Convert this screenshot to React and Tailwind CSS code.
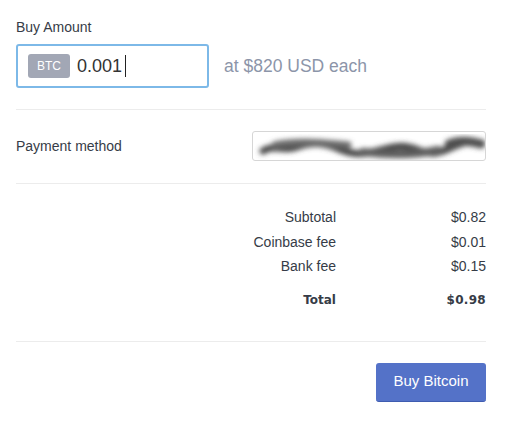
import React from 'react';

const rows = [
  ['Subtotal', '$0.82'],
  ['Coinbase fee', '$0.01'],
  ['Bank fee', '$0.15'],
];

// blurred-out card number, drawn as a smeared stroke
function BlurredMethod() {
  return (
    <div className="w-[234px] h-[30px] rounded-[3px] border border-[#d6d6d6] overflow-hidden">
      <svg width="234" height="30" viewBox="0 0 234 30">
        <defs>
          <filter id="smear" x="-10%" y="-50%" width="120%" height="200%">
            <feGaussianBlur stdDeviation="2.8" />
          </filter>
        </defs>
        <g filter="url(#smear)" fill="none" strokeLinecap="round">
          <path d="M10 19 C22 12 30 20 44 15 S70 10 86 17 S112 22 128 18 S150 12 168 19 S196 14 214 10 L228 11" stroke="#4a4a4a" strokeWidth="7" />
          <path d="M22 13 C45 8 70 11 95 13" stroke="#6a6a6a" strokeWidth="7" />
          <path d="M110 20 C135 23 160 24 185 18" stroke="#5d5d5d" strokeWidth="8" />
          <path d="M196 12 C206 8 218 9 228 12" stroke="#505050" strokeWidth="9" />
        </g>
      </svg>
    </div>
  );
}

export default function App() {
  return (
    <div
      className="w-[511px] h-[429px] bg-white pl-4 pr-[25px] pt-[18px] text-[#363c47]"
      style={{ fontFamily: '"Liberation Sans", Arial, sans-serif' }}
    >
      <div className="text-sm leading-[18px]">Buy Amount</div>

      {/* amount input */}
      <div className="mt-2 flex items-center">
        <div className="w-[193px] h-[44px] border-2 border-[#7db9e8] rounded-[3px] flex items-center pl-[10px]">
          <span className="w-[42px] h-6 rounded-[3px] bg-[#a2a7b5] text-white text-[12px] flex items-center justify-center">
            BTC
          </span>
          <span className="ml-[7px] text-[18px] text-[#333]">0.001</span>
          <span className="ml-[3px] w-px h-[22px] bg-[#222]" />
        </div>
        <span className="ml-[15px] text-[17.5px] text-[#8c95a9]">at $820 USD each</span>
      </div>

      <div className="mt-[21px] h-px bg-[#ececec]" />

      {/* payment method */}
      <div className="mt-[21px] flex items-center justify-between">
        <span className="text-sm">Payment method</span>
        <BlurredMethod />
      </div>

      <div className="mt-[22px] h-px bg-[#ececec]" />

      {/* summary */}
      <div className="mt-[21px] flex flex-col">
        {rows.map(([label, value]) => (
          <div key={label} className="flex h-[24.5px] items-center text-sm">
            <span className="flex-1 text-right">{label}</span>
            <span className="w-[150px] text-right">{value}</span>
          </div>
        ))}
        <div
          className="mt-[9px] flex h-6 items-center text-[12px] font-bold"
          style={{ fontFamily: '"DejaVu Sans", sans-serif' }}
        >
          <span className="flex-1 text-right">Total</span>
          <span className="w-[150px] text-right tracking-[0.3px]">$0.98</span>
        </div>
      </div>

      <div className="mt-[29px] h-px bg-[#ececec]" />

      <div className="mt-[21px] flex justify-end">
        <button className="w-[110px] h-[39px] rounded-[3px] bg-[#5472c8] border-b border-[#3f5cb0] text-white text-[15px]">
          Buy Bitcoin
        </button>
      </div>
    </div>
  );
}
